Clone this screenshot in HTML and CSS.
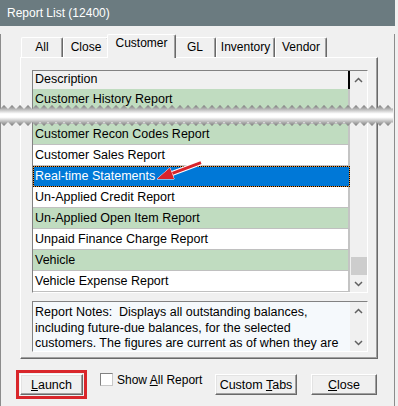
FILE: index.html
```html
<!DOCTYPE html>
<html lang="en">
<head>
    <meta charset="UTF-8">
    <title>Report List</title>
    <link rel="stylesheet" href="styles.css">
</head>
<body>
<div class="window">
    <div class="titlebar">Report List (12400)</div>
    <div class="client">
        <div class="tabs">
            <div class="tab w-all">All</div>
            <div class="tab w-close">Close</div>
            <div class="tab w-cust active">Customer</div>
            <div class="tab w-gl">GL</div>
            <div class="tab w-inv">Inventory</div>
            <div class="tab w-vend">Vendor</div>
        </div>
        <div class="panel">
            <div class="list">
                <div class="list-main">
                    <div class="list-header">Description</div>
                    <div class="row green">Customer History Report</div>
                    <div class="row gap"></div>
                    <div class="row green">Customer Recon Codes Report</div>
                    <div class="row">Customer Sales Report</div>
                    <div class="row sel">Real-time Statements</div>
                    <div class="row">Un-Applied Credit Report</div>
                    <div class="row green">Un-Applied Open Item Report</div>
                    <div class="row">Unpaid Finance Charge Report</div>
                    <div class="row green">Vehicle</div>
                    <div class="row">Vehicle Expense Report</div>
                </div>
                <div class="vscroll">
                    <div class="sb-btn"><svg width="9" height="6" viewBox="0 0 9 6"><polyline points="1,5 4.5,1.5 8,5"/></svg></div>
                    <div class="sb-track"><div class="thumb"></div></div>
                    <div class="sb-btn"><svg width="9" height="6" viewBox="0 0 9 6"><polyline points="1,1 4.5,4.5 8,1"/></svg></div>
                </div>
            </div>
            <div class="notes">
                <p>Report Notes:&nbsp; Displays all outstanding balances, including future-due balances, for the selected customers. The figures are current as of when they are</p>
                <div class="vscroll">
                    <div class="sb-btn"><svg width="9" height="6" viewBox="0 0 9 6"><polyline points="1,5 4.5,1.5 8,5"/></svg></div>
                    <div class="sb-track"></div>
                    <div class="sb-btn"><svg width="9" height="6" viewBox="0 0 9 6"><polyline points="1,1 4.5,4.5 8,1"/></svg></div>
                </div>
            </div>
        </div>
        <div class="actions">
            <button class="btn launch"><u>L</u>aunch</button>
            <label class="check"><span class="box"></span><span>Show <u>A</u>ll Report</span></label>
            <button class="btn custom">Custom <u>T</u>abs</button>
            <button class="btn close"><u>C</u>lose</button>
        </div>
    </div>

    <!-- torn-paper break across the list -->
    <svg class="tear" width="395" height="23" viewBox="0 0 395 23">
        <defs>
            <linearGradient id="tearShade" x1="0" y1="0" x2="0" y2="1">
                <stop offset="0" stop-color="#787878"/>
                <stop offset="0.24" stop-color="#c4c4c4"/>
                <stop offset="0.42" stop-color="#ffffff"/>
                <stop offset="0.58" stop-color="#ffffff"/>
                <stop offset="0.76" stop-color="#c4c4c4"/>
                <stop offset="1" stop-color="#787878"/>
            </linearGradient>
            <pattern id="tearTile" patternUnits="userSpaceOnUse" width="8" height="23">
                <polygon points="0,5 4,1 8,5 8,18 4,22 0,18" fill="url(#tearShade)"/>
            </pattern>
            <filter id="soft"><feGaussianBlur stdDeviation="0.5"/></filter>
        </defs>
        <rect x="0" y="0" width="393" height="23" rx="2" fill="url(#tearTile)" filter="url(#soft)"/>
    </svg>

    <!-- callout arrow -->
    <svg class="callout" width="56" height="30" viewBox="0 0 56 30">
        <line x1="51" y1="7.6" x2="21" y2="18.8" stroke="#fff" stroke-width="5"/>
        <line x1="51" y1="7.6" x2="21" y2="18.8" stroke="#d8232a" stroke-width="3"/>
        <polygon points="7,24 24.1,24 19.9,12.8" fill="#d8232a" stroke="#fff" stroke-width="1" paint-order="stroke"/>
    </svg>
</div>
</body>
</html>
```

FILE: styles.css
```css
body {
    margin: 0;
    background: #f0f0f0;
    font-family: "Liberation Sans", Arial, sans-serif;
    font-size: 12.5px;
    color: #000;
}
.window {
    position: relative;
    width: 395px;
}
.titlebar {
    height: 26px;
    line-height: 26px;
    padding-left: 7px;
    background: #6b7b80;
    color: #fff;
    font-size: 12px;
}
.client {
    height: 379px;
    border: 1px solid #8c8c8c;
    border-top: none;
    background: #f0f0f0;
}

/* tabs */
.tabs {
    display: flex;
    align-items: flex-end;
    height: 23px;
    margin: 8px 0 0 20px;
}
.tab {
    box-sizing: border-box;
    height: 20px;
    border: 1px solid;
    border-color: #fff #696969 transparent #fff;
    border-bottom: none;
    border-radius: 2px 2px 0 0;
    box-shadow: inset -1px 0 #a0a0a0;
    text-align: center;
    line-height: 18px;
    font-size: 12px;
    background: #f0f0f0;
}
.tab.active {
    position: relative;
    z-index: 1;
    height: 24px;
    margin: 0 -2px -1px;
    line-height: 17px;
}
.w-all { width: 42px; }
.w-close { width: 46px; }
.w-cust { width: 69px; }
.w-gl { width: 42px; }
.w-inv { width: 59px; }
.w-vend { width: 52px; }

/* tab page */
.panel {
    box-sizing: border-box;
    width: 358px;
    height: 302px;
    margin-left: 19px;
    padding: 12px 0 0 11px;
    border: 1px solid;
    border-color: #fff #696969 #696969 #fff;
    box-shadow: inset -1px -1px #a0a0a0;
}
.list {
    display: flex;
    box-sizing: border-box;
    width: 336px;
    height: 223px;
    border: 1px solid;
    border-color: #828282 #fff #fff #828282;
    background: #fff;
    overflow: hidden;
}
.list-main {
    width: 317px;
}
.list-header {
    box-sizing: border-box;
    height: 18px;
    line-height: 17px;
    padding-left: 2px;
    background: #f0f0f0;
    border-right: 2px solid #000;
}
.row {
    box-sizing: border-box;
    height: 21px;
    line-height: 20px;
    padding-left: 2px;
    border-bottom: 1px solid #c0c0c0;
    border-right: 2px solid #c4c4c4;
    white-space: nowrap;
    overflow: hidden;
}
.row.gap {
    height: 14px;
}
.green {
    background: #c0dcc0;
}
.row.sel {
    border: 1px dotted #000;
    line-height: 19px;
    padding-left: 1px;
    color: #fff;
    background: linear-gradient(#0078d7, #0078d7) padding-box, #e8913a;
}

/* scroll bars */
.vscroll {
    display: flex;
    flex-direction: column;
    width: 17px;
    background: #f0f0f0;
}
.sb-btn {
    display: flex;
    align-items: center;
    justify-content: center;
    height: 17px;
}
.sb-btn polyline {
    fill: none;
    stroke: #606060;
    stroke-width: 1.5;
}
.sb-track {
    flex: 1;
    display: flex;
    flex-direction: column;
    justify-content: flex-end;
}
.thumb {
    height: 18px;
    margin: 0 0 0 1px;
    background: #cdcdcd;
}

/* notes */
.notes {
    display: flex;
    box-sizing: border-box;
    width: 336px;
    height: 51px;
    margin-top: 8px;
    border: 1px solid;
    border-color: #828282 #fff #fff #828282;
    background: #f5f9fc;
}
.notes p {
    box-sizing: border-box;
    width: 317px;
    margin: 0;
    padding: 3px 0 0 2px;
    line-height: 15.5px;
    overflow: hidden;
}

/* bottom buttons */
.actions {
    display: flex;
    align-items: center;
    margin: 15px 0 0 19px;
}
.btn {
    box-sizing: border-box;
    height: 21px;
    padding: 0;
    border: 1px solid;
    border-color: #fff #696969 #696969 #fff;
    box-shadow: inset -1px -1px #a0a0a0, inset 1px 1px #e3e3e3;
    background: #f0f0f0;
    font: inherit;
    color: #000;
    line-height: 18px;
    text-align: center;
}
.launch {
    width: 63px;
    outline: 3px solid #d9262b;
    outline-offset: 1px;
}
.check {
    display: flex;
    align-self: flex-start;
    align-items: center;
    gap: 4px;
    width: 115px;
    height: 13px;
    margin: -1px 0 0 17px;
    font-size: 12px;
    white-space: nowrap;
}
.box {
    box-sizing: border-box;
    flex: none;
    width: 13px;
    height: 13px;
    border: 1px solid;
    border-color: #828282 #c8c8c8 #c8c8c8 #828282;
    background: #fff;
}
.custom {
    width: 82px;
}
.close {
    width: 66px;
    margin-left: 14px;
}

/* overlays */
.tear {
    position: absolute;
    left: 0;
    top: 104px;
}
.callout {
    position: absolute;
    left: 150px;
    top: 155px;
}
```
